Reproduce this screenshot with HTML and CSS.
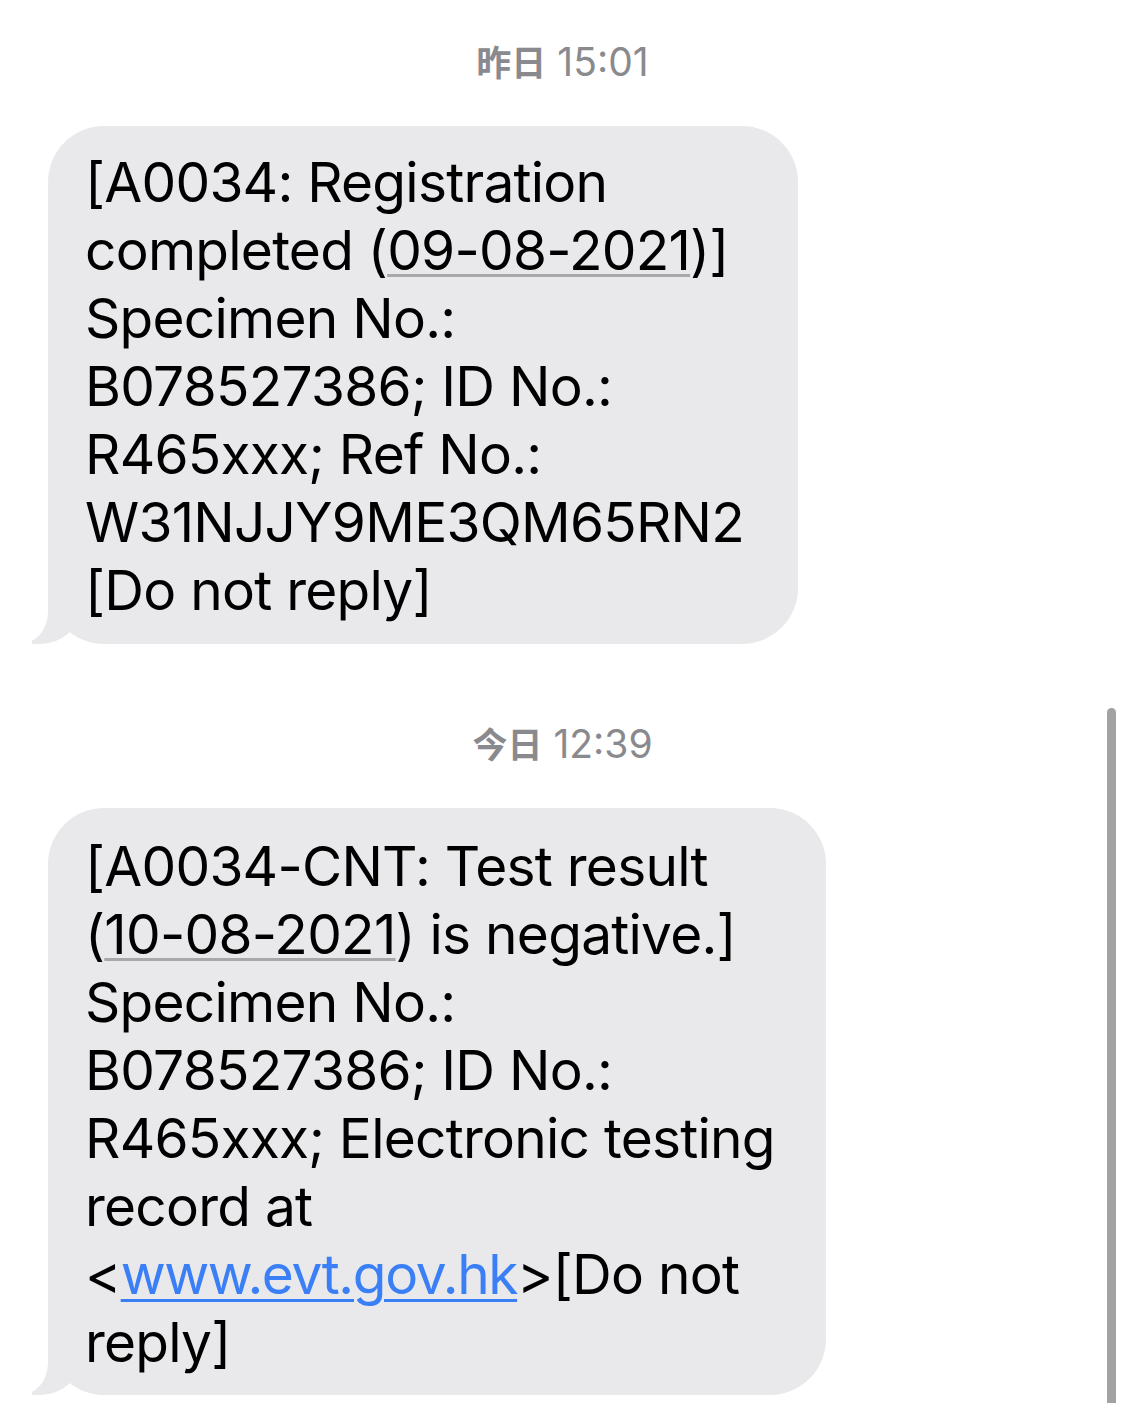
FILE: index.html
```html
<!DOCTYPE html>
<html lang="zh">
<head>
<meta charset="utf-8">
<title>Messages</title>
<link rel="stylesheet" href="styles.css">
</head>
<body>
<main class="thread">
  <div class="stamp stamp-first"><span class="day">昨日</span> 15:01</div>
  <div class="bubble bubble-one">
    <p class="msg">[A0034: Registration<br>completed (<span class="date">09-08-2021</span>)]<br>Specimen No.:<br>B078527386; ID No.:<br>R465xxx; Ref No.:<br>W31NJJY9ME3QM65RN2<br>[Do not reply]</p>
  </div>
  <div class="stamp stamp-second"><span class="day">今日</span> 12:39</div>
  <div class="bubble bubble-two">
    <p class="msg">[A0034-CNT: Test result<br>(<span class="date">10-08-2021</span>) is negative.]<br>Specimen No.:<br>B078527386; ID No.:<br>R465xxx; Electronic testing<br>record at<br>&lt;<a class="link" href="#">www.evt.gov.hk</a>&gt;[Do not<br>reply]</p>
  </div>
</main>
<div class="scrollbar"></div>
</body>
</html>
```

FILE: styles.css
```css
html, body {
  margin: 0;
  padding: 0;
  background: #ffffff;
}

body {
  width: 1125px;
  height: 1403px;
  overflow: hidden;
  position: relative;
  font-family: Inter, "Noto Sans CJK SC", sans-serif;
}

.thread {
  display: flex;
  flex-direction: column;
  align-items: flex-start;
  padding-top: 40px;
}

.stamp {
  align-self: stretch;
  height: 44px;
  text-align: center;
  font-size: 39px;
  line-height: 44px;
  color: #8a8a8e;
  font-weight: 400;
  overflow: visible;
}

.stamp .day {
  font-family: "Noto Sans CJK SC", sans-serif;
  font-weight: 700;
  font-size: 35px;
  line-height: 1;
}

.stamp-first {
  margin-bottom: 42px;
}

.stamp-second {
  margin-top: 78px;
  margin-bottom: 42px;
}

.bubble {
  position: relative;
  margin-left: 48px;
  box-sizing: border-box;
  background: #e9e9eb;
  border-radius: 56px;
  padding-left: 37px;
}

.bubble::before {
  content: "";
  position: absolute;
  bottom: 0;
  left: -16px;
  width: 48px;
  height: 60px;
  background: #e9e9eb;
  border-bottom-right-radius: 40px 36px;
  z-index: 0;
}

.bubble::after {
  content: "";
  position: absolute;
  bottom: 0;
  left: -60px;
  width: 60px;
  height: 62px;
  background: #ffffff;
  border-bottom-right-radius: 28px 32px;
  z-index: 1;
}

.bubble-one {
  width: 750px;
  padding-top: 22px;
  padding-bottom: 20px;
}

.bubble-two {
  width: 778px;
  padding-top: 24px;
  padding-bottom: 19px;
}

.msg {
  position: relative;
  z-index: 2;
  margin: 0;
  font-size: 55px;
  line-height: 68px;
  color: #000000;
  white-space: nowrap;
  letter-spacing: -0.75px;
}

.date {
  text-decoration: underline;
  text-decoration-color: #a8a8aa;
  text-decoration-thickness: 3px;
  text-underline-offset: 4px;
}

.link {
  color: #3a7ff6;
  text-decoration: underline;
  text-decoration-thickness: 3px;
  text-underline-offset: 5px;
  letter-spacing: -1.4px;
}

.scrollbar {
  position: absolute;
  left: 1107px;
  top: 708px;
  width: 9px;
  bottom: -6px;
  background: #a2a2a2;
  border-radius: 5px;
}
```
